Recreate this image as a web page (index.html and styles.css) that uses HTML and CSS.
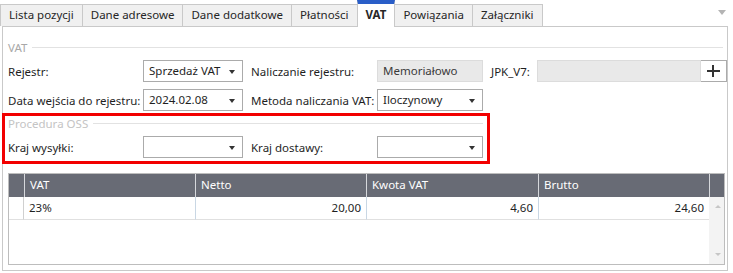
FILE: index.html
```html
<!DOCTYPE html>
<html lang="pl">
<head>
    <meta charset="UTF-8" />
    <title>Dokument - VAT</title>
    <link rel="stylesheet" href="styles.css">
</head>
<body>
    <div class="tabs">
        <div class="tab">Lista pozycji</div>
        <div class="tab">Dane adresowe</div>
        <div class="tab">Dane dodatkowe</div>
        <div class="tab">Płatności</div>
        <div class="tab active">VAT</div>
        <div class="tab">Powiązania</div>
        <div class="tab">Załączniki</div>
        <div class="tab-menu"></div>
    </div>

    <div class="panel">
        <div class="group-title"><span>VAT</span></div>

        <div class="form-row">
            <label>Rejestr:</label>
            <div class="combo">Sprzedaż VAT</div>
            <label class="pad">Naliczanie rejestru:</label>
            <div class="field readonly">Memoriałowo</div>
            <label class="pad">JPK_V7:</label>
            <div class="field readonly"></div>
            <div class="btn-plus"></div>
        </div>

        <div class="form-row">
            <label>Data wejścia do rejestru:</label>
            <div class="combo">2024.02.08</div>
            <label class="pad">Metoda naliczania VAT:</label>
            <div class="combo">Iloczynowy</div>
        </div>

        <div class="oss">
            <div class="group-title short"><span>Procedura OSS</span></div>
            <div class="form-row">
                <label>Kraj wysyłki:</label>
                <div class="combo"></div>
                <label class="pad">Kraj dostawy:</label>
                <div class="combo"></div>
            </div>
            <div class="highlight"></div>
        </div>

        <div class="grid">
            <div class="hd"></div>
            <div class="hd">VAT</div>
            <div class="hd">Netto</div>
            <div class="hd">Kwota VAT</div>
            <div class="hd">Brutto</div>
            <div class="hd"></div>

            <div class="cell sel"></div>
            <div class="cell">23%</div>
            <div class="cell num">20,00</div>
            <div class="cell num">4,60</div>
            <div class="cell num">24,60</div>
            <div class="scroll">
                <span class="up"></span>
                <span class="down"></span>
            </div>
        </div>
    </div>
</body>
</html>
```

FILE: styles.css
```css
body {
    margin: 0;
    font-family: "Noto Sans", "Open Sans", sans-serif;
    font-size: 11.5px;
    color: #1f1f1f;
    background: #fff;
    width: 733px;
    height: 273px;
    overflow: hidden;
}

/* zakladki */
.tabs {
    display: flex;
    align-items: flex-end;
    height: 26px;
    position: relative;
}
.tab {
    box-sizing: border-box;
    height: 22px;
    line-height: 20px;
    padding: 0 8px;
    border: 1px solid #c9c9c9;
    border-bottom: none;
    margin-right: -1px;
    background: #f0f0f0;
    color: #262626;
    white-space: nowrap;
}
.tab.active {
    height: 27px;
    margin-bottom: -1px;
    background: #fff;
    border-top: 4px solid #2a5ec8;
    line-height: 22px;
    font-weight: bold;
    padding: 0 8px;
    position: relative;
    z-index: 1;
}
.tab-menu {
    margin-left: auto;
    margin-right: 7px;
    align-self: flex-start;
    margin-top: 10px;
    width: 0;
    height: 0;
    border-left: 4px solid transparent;
    border-right: 4px solid transparent;
    border-top: 5px solid #b4b4b4;
}

/* panel */
.panel {
    box-sizing: border-box;
    margin-left: 2px;
    width: 726px;
    height: 245px;
    border: 1px solid #c9c9c9;
    padding: 13px 2px 0 5px;
}
.group-title {
    display: flex;
    align-items: center;
    height: 14px;
    color: #a8a8a8;
    margin-bottom: 6px;
}
.group-title::after {
    content: "";
    flex: 1;
    height: 1px;
    background: #e2e2e2;
    margin-left: 5px;
    margin-right: 2px;
}
.group-title.short {
    width: 477px;
    color: #c4c4c4;
}

.form-row {
    display: grid;
    grid-template-columns: 135px 100px 134px 106px 54px 164px 26px;
    align-items: center;
    height: 22px;
    margin-bottom: 7px;
}
.form-row label {
    white-space: nowrap;
}
.form-row label.pad {
    padding-left: 8px;
}
.combo, .field {
    box-sizing: border-box;
    height: 22px;
    line-height: 20px;
    padding: 0 5px;
    border: 1px solid #ababab;
    background: #fff;
    position: relative;
    white-space: nowrap;
}
.combo::after {
    content: "";
    position: absolute;
    right: 7px;
    top: 9px;
    border-left: 3px solid transparent;
    border-right: 3px solid transparent;
    border-top: 4px solid #333;
}
.field.readonly {
    background: #e9e9e9;
    border-color: #dcdcdc;
    color: #3a3a3a;
}
.btn-plus {
    box-sizing: border-box;
    height: 22px;
    border: 1px solid #ababab;
    border-left: none;
    position: relative;
}
.btn-plus::before, .btn-plus::after {
    content: "";
    position: absolute;
    background: #333;
}
.btn-plus::before {
    left: 6px;
    top: 9px;
    width: 13px;
    height: 2px;
}
.btn-plus::after {
    left: 11px;
    top: 4px;
    width: 2px;
    height: 12px;
}

/* procedura OSS */
.oss {
    position: relative;
    padding-top: 3px;
    margin-top: -5px;
    margin-bottom: 15px;
}
.oss .form-row {
    margin-bottom: 0;
}
.highlight {
    position: absolute;
    left: -6px;
    top: 0;
    width: 488px;
    height: 51px;
    box-sizing: border-box;
    border: 3px solid #f20000;
}

/* tabela */
.grid {
    box-sizing: border-box;
    width: 717px;
    height: 92px;
    border: 1px solid #bdbdbd;
    display: grid;
    grid-template-columns: 15px 171px 171px 172px 171px 1fr;
    grid-template-rows: 23px 23px 1fr;
}
.hd {
    background: #686b75;
    color: #fff;
    line-height: 22px;
    padding-left: 5px;
    border-left: 1px solid #d6d8dc;
}
.hd:first-child {
    border-left: none;
}
.cell {
    line-height: 22px;
    padding: 0 5px;
    border-left: 1px solid #c9d7e4;
    border-bottom: 1px solid #e0e0e0;
}
.cell.sel {
    border-left: none;
    border-right: 1px solid #d0d0d0;
}
.cell.sel + .cell {
    border-left: none;
}
.cell.num {
    text-align: right;
}
.scroll {
    grid-column: 6;
    grid-row: 2 / 4;
    background: #f3f3f3;
    position: relative;
}
.scroll .up, .scroll .down {
    position: absolute;
    left: 6px;
    border-left: 3px solid transparent;
    border-right: 3px solid transparent;
}
.scroll .up {
    top: 8px;
    border-bottom: 3px solid #c6c6c6;
}
.scroll .down {
    bottom: 8px;
    border-top: 3px solid #c6c6c6;
}
```
